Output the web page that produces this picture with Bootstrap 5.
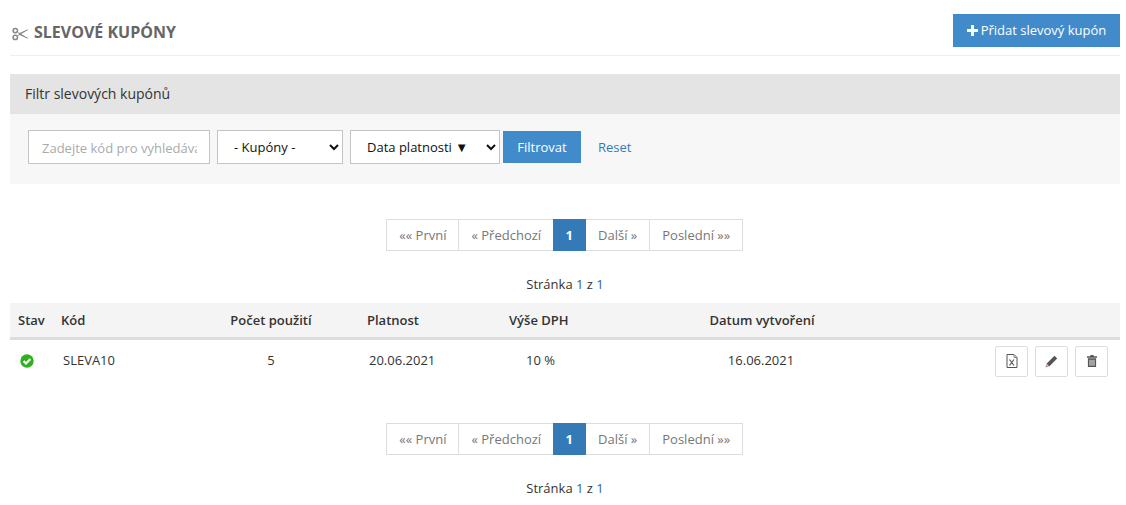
<!DOCTYPE html>
<html lang="cs">
<head>
<meta charset="utf-8">
<title>Slevové kupóny</title>
<link href="https://cdn.jsdelivr.net/npm/bootstrap@5.3.0/dist/css/bootstrap.min.css" rel="stylesheet">
<style>
body{font-family:"Open Sans",sans-serif;font-size:13px;color:#333;background:#fff;overflow:hidden}
.shell{padding:14px 6px 0 10px}
.head-bar{height:42px;border-bottom:1px solid #eee;margin-bottom:18px}
.page-title{font-size:16px;font-weight:700;color:#666;margin:0;line-height:36px;text-transform:uppercase}
.page-title svg{margin:0 6px 0 2px;vertical-align:-3px}
.add-btn{background:#428bca;color:#fff;border:0;border-radius:0;height:33px;width:167px;padding:0;font-size:13px;line-height:33px;align-self:flex-start}
.add-btn:hover{background:#428bca;color:#fff}
.add-btn svg{vertical-align:-1px;margin-right:3px}
.filter-head{background:#e4e4e4;height:40px;line-height:40px;padding-left:15px;color:#333;font-size:14px}
.filter-body{background:#f7f7f7;height:70px;padding:16px 0 0 18px}
.f-input,.f-select{height:34px;border:1px solid #c4c4c4;border-radius:0;font-size:13px;background-color:#fff}
.f-input{width:182px;padding:1px 12px 0 13px;margin-right:7px;color:#555}
.f-input::placeholder{color:#aaa;opacity:1}
.form-select.f-select{appearance:auto;-webkit-appearance:auto;background-image:none;padding:0 0 0 12px;margin-right:7px;color:#111;line-height:normal}
.form-select.sel-a{width:126px}
.form-select.sel-b{width:150px;margin-right:3px}
.f-btn{background:#428bca;color:#fff;border:0;border-radius:0;width:78px;height:32px;padding:1px 0 0;font-size:13px;font-weight:500;margin-top:1px}
.f-btn:hover{background:#428bca;color:#fff}
.f-reset{color:#337ab7;text-decoration:none;font-size:13px;margin-left:17px;line-height:34px}
.pager-wrap{margin-top:35px}
.pager-wrap.second{margin-top:41px}
.pager-wrap .pagination{margin:0}
.pager-wrap .page-link{border-radius:0!important;border:1px solid #ddd;color:#777;font-size:13px;height:32px;line-height:30px;padding:0 12.5px;background:#fff}
.pager-wrap .page-item{margin-left:-1px}
.pager-wrap .page-item.active .page-link{background:#337ab7;border-color:#337ab7;color:#fff;font-weight:700;padding:0 12px}
.pager-wrap .page-item .page-link.pager-next{padding:0 13px}
.pager-wrap .page-item .page-link.pager-last{padding:0 12px}
.page-info{text-align:center;font-size:13px;color:#333;margin:24px 0 0;line-height:18px}
.page-info span{color:#2f6496}
.data-wrap{margin-top:10px}
.coupon-table{margin:0;table-layout:fixed;width:1110px;font-size:13px;border-collapse:separate;border-spacing:0}
.col-stav{width:51px}.col-kod{width:122px}.col-pocet{width:176px}.col-plat{width:142px}.col-dph{width:170px}.col-datum{width:182px}
.coupon-table>thead>tr>th{background:#f4f4f4;border-bottom:3px solid #ddd;height:37px;padding:2px 0 0;font-weight:600;color:#333;vertical-align:middle}
.coupon-table>thead>tr>th.ps-2{padding-left:8px}
.coupon-table>tbody>tr>td{height:42px;padding:0;border:0;color:#333;vertical-align:middle}
.coupon-table>tbody>tr>td.cell-stav{padding-left:10px}
.coupon-table>tbody>tr>td.cell-kod{padding-left:2px}
.coupon-table>tbody>tr>td.cell-plat{padding-left:10px}
.coupon-table>tbody>tr>td.cell-dph{padding-left:25px}
.coupon-table>tbody>tr>td.cell-datum{padding-right:2px}
.coupon-table>tbody>tr>td.cell-akce{padding-right:12px}
.coupon-table svg{display:block}
.row-actions{gap:7px}
.row-btn{width:33px;height:31px;padding:0;border:1px solid #ddd;border-radius:2px;background:#fff;display:flex;align-items:center;justify-content:center}
.row-btn:hover{background:#fff;border-color:#ddd}
</style>
</head>
<body>
<div class="shell">
  <div class="head-bar d-flex justify-content-between">
    <h1 class="page-title"><svg width="16" height="14" viewBox="0 0 16 14"><circle cx="3.3" cy="3.6" r="2.2" fill="none" stroke="#888" stroke-width="1.5"/><circle cx="3.3" cy="10.4" r="2.2" fill="none" stroke="#888" stroke-width="1.5"/><path d="M5 4.6 7.5 6 15.8 2.2 16 3 9.2 7 16 11 15.8 11.8 7.5 8 5 9.4 7 7z" fill="#888"/></svg>Slevové kupóny</h1>
    <a href="#" class="btn add-btn"><svg width="11" height="11" viewBox="0 0 11 11" fill="#fff"><path d="M4 0h3v4h4v3H7v4H4V7H0V4h4z"/></svg>Přidat slevový kupón</a>
  </div>
  <div class="filter-head">Filtr slevových kupónů</div>
  <form class="filter-body d-flex align-items-start">
    <input type="text" class="f-input" placeholder="Zadejte kód pro vyhledávání">
    <select class="form-select f-select sel-a"><option>- Kupóny -</option></select>
    <select class="form-select f-select sel-b"><option>Data platnosti ▼</option></select>
    <button type="button" class="btn f-btn">Filtrovat</button>
    <a href="#" class="f-reset">Reset</a>
  </form>
  <nav class="pager-wrap"><ul class="pagination justify-content-center">
    <li class="page-item"><a class="page-link" href="#">«« První</a></li>
    <li class="page-item"><a class="page-link" href="#">« Předchozí</a></li>
    <li class="page-item active"><a class="page-link" href="#">1</a></li>
    <li class="page-item"><a class="page-link pager-next" href="#">Další »</a></li>
    <li class="page-item"><a class="page-link pager-last" href="#">Poslední »»</a></li>
  </ul></nav>
  <p class="page-info">Stránka <span>1</span> z <span>1</span></p>
  <div class="data-wrap">
    <table class="table coupon-table">
      <colgroup><col class="col-stav"><col class="col-kod"><col class="col-pocet"><col class="col-plat"><col class="col-dph"><col class="col-datum"><col></colgroup>
      <thead><tr>
        <th class="ps-2">Stav</th><th>Kód</th><th class="text-center">Počet použití</th><th class="ps-2">Platnost</th><th class="ps-2">Výše DPH</th><th class="text-center">Datum vytvoření</th><th></th>
      </tr></thead>
      <tbody><tr>
        <td class="cell-stav"><svg width="14" height="14" viewBox="0 0 14 14"><circle cx="7" cy="7" r="6.7" fill="#2fb01f"/><path d="M3.6 7.1 6 9.5 10.4 5" fill="none" stroke="#fff" stroke-width="2.2"/></svg></td>
        <td class="cell-kod">SLEVA10</td>
        <td class="text-center">5</td>
        <td class="cell-plat">20.06.2021</td>
        <td class="cell-dph">10 %</td>
        <td class="text-center cell-datum">16.06.2021</td>
        <td class="cell-akce">
          <div class="d-flex justify-content-end row-actions">
          <button class="btn row-btn" title="Export"><svg width="12" height="14" viewBox="0 0 12 14" fill="none" stroke="#555"><path d="M1 .5h7l3 3v10H1z"/><path d="M8 .5v3h3" stroke="#888"/><path d="M3.5 5.5 8 11.5M8 5.5 3.5 11.5" stroke-width="1.2"/></svg></button>
          <button class="btn row-btn" title="Upravit"><svg width="13" height="13" viewBox="0 0 13 13"><path d="M9.5.8 12.2 3.5 4.2 11.5 1.5 8.8z" fill="#555"/><path d="M1.2 9.3 3.7 11.8.5 12.5z" fill="#b98"/></svg></button>
          <button class="btn row-btn" title="Smazat"><svg width="10" height="12" viewBox="0 0 11 13" fill="#555"><path d="M4 0h3l.6 1.2H11v1.6H0V1.2h3.4zM1 3.6h9V13H1zm1.8 1.4v6.6h1V5zm2.2 0v6.6h1V5zm2.2 0v6.6h1V5z"/></svg></button>
          </div>
        </td>
      </tr></tbody>
    </table>
  </div>
  <nav class="pager-wrap second"><ul class="pagination justify-content-center">
    <li class="page-item"><a class="page-link" href="#">«« První</a></li>
    <li class="page-item"><a class="page-link" href="#">« Předchozí</a></li>
    <li class="page-item active"><a class="page-link" href="#">1</a></li>
    <li class="page-item"><a class="page-link pager-next" href="#">Další »</a></li>
    <li class="page-item"><a class="page-link pager-last" href="#">Poslední »»</a></li>
  </ul></nav>
  <p class="page-info">Stránka <span>1</span> z <span>1</span></p>
</div>
<script src="https://cdn.jsdelivr.net/npm/bootstrap@5.3.0/dist/js/bootstrap.bundle.min.js"></script>
</body>
</html>
